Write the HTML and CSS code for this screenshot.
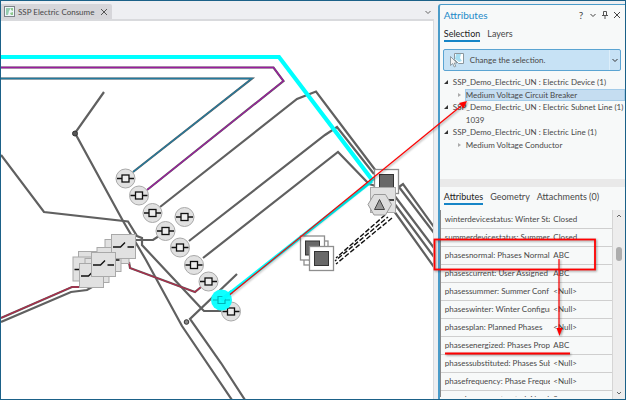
FILE: index.html
```html
<!DOCTYPE html>
<html lang="en">
<head>
<meta charset="utf-8">
<title>SSP Electric Consume</title>
<link rel="stylesheet" href="styles.css">
</head>
<body>
<div class="app">
  <main class="view">
    <div class="tabbar">
      <div class="doc-tab">
        <svg class="doc-icon" viewBox="0 0 11 11" aria-hidden="true">
          <rect x=".5" y=".5" width="10" height="10" fill="#eef5fa" stroke="#7c8288"/>
          <path d="M2 2h5L5 5l-1 4H2z" fill="#96ccb0"/>
          <path d="M7 2h2v3L7 4zM6 7l3-1v3H7z" fill="#8fc98e"/>
        </svg>
        <span>SSP Electric Consume</span>
        <button class="icon-btn" aria-label="Close view">
          <svg width="8" height="8" viewBox="0 0 8 8"><path d="M1 1l6 6M7 1L1 7" stroke="#555" fill="none"/></svg>
        </button>
      </div>
      <button class="icon-btn" aria-label="View list">
        <svg width="8" height="8" viewBox="0 0 8 8"><path d="M1.500 3l2.500 2.500L6.500 3" stroke="#666" fill="none"/></svg>
      </button>
    </div>
    <svg class="map" viewBox="1 21 433 378" preserveAspectRatio="xMinYMin slice" role="img" aria-label="Electric network diagram">
      <defs>
        <g id="breaker">
          <circle r="9.500" fill="#e1e1e1" stroke="#a9a9a9"/>
          <path d="M-8.500 0H-3.500M3.500 0H8.500" stroke="#111" stroke-width="1.300"/>
          <rect x="-3.500" y="-3.500" width="7" height="7" fill="#eee" stroke="#111" stroke-width="1.300"/>
        </g>
        <g id="switch">
          <rect width="24" height="24" fill="#e1e1e1" stroke="#a9a9a9"/>
          <path d="M1.500 12.500H9L13.500 8M16 12.500H22.500" fill="none" stroke="#111" stroke-width="1.400"/>
        </g>
        <g id="box">
          <rect width="24" height="24" fill="#fff" stroke="#8e8e8e" stroke-width="1.300"/>
          <rect x="5" y="5" width="14" height="14" fill="#686868" stroke="#333"/>
        </g>
      </defs>
      <g class="line">
        <path d="M104 92L75 133L123 221L146 260L182 326L232 400"/>
        <path d="M1 155L44 212L128 221.500L137 236L142 238V245L156 260L201 308L204 311H226"/>
        <path d="M135 240H153L162 234"/>
        <path d="M237 274L190 319L221 363L245 400"/>
        <path d="M160 207L297 99L316 91.500L345 130L376 171"/>
        <path d="M189 241L325 135L337 127L374 174"/>
        <path d="M203 258L338 152L369 184L376 186"/>
        <path d="M399 187L403 184L434 227M399 187L434 233M394 195L434 248M394 203L434 257M394 211L434 267"/>
        <path d="M1 322L71 292L87 290L92 287"/>
        <path d="M1 67.500H273.500L283.500 81L147 190M1 78.500H252L133 172"/>
        <path d="M129 262L130 268L195 292L201 287M1 318L72 287H82"/>
      </g>
      <path class="inner purple" d="M1 67.500H273.500L283.500 81L147 190"/>
      <path class="inner blue" d="M1 78.500H252L133 172"/>
      <path class="inner maroon" d="M129 262L130 268L195 292L201 287M1 318L72 287H82"/>
      <path d="M1 57H279L373 181" fill="none" stroke="#0ff" stroke-width="4.200"/>
      <path d="M372 181L221 300" fill="none" stroke="#0ff" stroke-width="3.200"/>
      <circle cx="75" cy="133.500" r="2.500" fill="#555" stroke="#333"/>
      <circle cx="186.500" cy="322" r="2.300" fill="#888" stroke="#333"/>

      <g fill="none" stroke="#111" stroke-width="1.400" stroke-dasharray="5 2">
        <path d="M385 215L336 258"/><path d="M388 217L335 261" stroke-dashoffset="3"/><path d="M392 218L336 264"/>
      </g>
      <use href="#box" x="304" y="241"/>
      <use href="#box" x="300.500" y="236"/>
      <use href="#box" x="309.500" y="246.500"/>
      <use href="#box" x="374.500" y="169.500"/>
      <rect x="370.500" y="187.500" width="25" height="25" fill="#e1e1e1" stroke="#a9a9a9"/>
      <path d="M389 200h5" stroke="#111" stroke-width="1.500"/>
      <path d="M368 204.500L374 194.500H385.500L391.500 204.500L385.500 215H374Z" fill="#dedede" stroke="#999"/>
      <path d="M379.500 199.500L384.500 209.500H374.500Z" fill="#999" stroke="#444"/>

      <use href="#switch" x="105" y="239.500"/>
      <use href="#switch" x="78.500" y="251.500"/>
      <use href="#switch" x="73" y="257"/>
      <use href="#switch" x="85" y="258.500"/>
      <use href="#switch" x="79.500" y="263.500"/>
      <use href="#switch" x="97" y="247.500"/>
      <use href="#switch" x="111.500" y="234.500"/>
      <use href="#switch" x="91.500" y="252.500"/>

      <use href="#breaker" x="125.500" y="178.500"/>
      <use href="#breaker" x="139" y="195.500"/>
      <use href="#breaker" x="152.500" y="213"/>
      <use href="#breaker" x="184.500" y="217"/>
      <use href="#breaker" x="165.500" y="231"/>
      <use href="#breaker" x="180" y="247.500"/>
      <use href="#breaker" x="194" y="265"/>
      <use href="#breaker" x="208.500" y="281.500"/>
      <use href="#breaker" x="231" y="311.500"/>
      <circle cx="221.500" cy="300" r="10.500" fill="#1ff"/>
      <path d="M213 300h5M225 300h5M218 296.500h7v7h-7z" fill="none" stroke="#00b5b8" stroke-width="1.200"/>
      <path d="M221 300L232 291.500" stroke="#0ff" stroke-width="4"/>
    </svg>
  </main>

  <aside class="pane">
    <header class="pane-head">
      <h1>Attributes</h1>
      <button class="icon-btn help" aria-label="Help">?</button>
      <button class="icon-btn" aria-label="Options"><svg width="8" height="8" viewBox="0 0 8 8"><path d="M1.500 3L4 5.500 6.500 3" stroke="#444" fill="none"/></svg></button>
      <button class="icon-btn" aria-label="Pin"><svg width="8" height="8" viewBox="0 0 8 8"><path d="M2.500 .5h3v4h-3zM1 4.500h6M4 4.500V8" stroke="#555" fill="none"/></svg></button>
      <button class="icon-btn" aria-label="Close"><svg width="8" height="8" viewBox="0 0 8 8"><path d="M1 1l6 6M7 1L1 7" stroke="#444" fill="none"/></svg></button>
    </header>
    <nav class="tabs">
      <a href="#selection" class="active">Selection</a>
      <a href="#layers">Layers</a>
    </nav>
    <div class="split-btn">
      <button class="change">
        <svg width="16" height="16" viewBox="0 0 16 16" aria-hidden="true">
          <path d="M5.500 1.500h9v10h-5l-4-4z" fill="#fff" stroke="#8b979e"/>
          <path d="M7 2h5l-1 4 2 3-3 1-4-3z" fill="#a6def2"/>
          <path d="M1.500 4.500v9l2.200-2 1.600 3.500 1.500-.8-1.500-3.200h2.700z" fill="#f4f4f4" stroke="#7e8a91" stroke-width=".8"/>
        </svg>
        <span>Change the selection.</span>
      </button>
      <button class="drop" aria-label="More selection options"><svg width="8" height="8" viewBox="0 0 8 8"><path d="M1.500 3L4 5.500 6.500 3" stroke="#333" fill="none"/></svg></button>
    </div>
    <ul class="tree">
      <li><div class="group">SSP_Demo_Electric_UN : Electric Device (1)</div>
        <ul><li class="leaf more"><span class="label selected">Medium Voltage Circuit Breaker</span></li></ul></li>
      <li><div class="group">SSP_Demo_Electric_UN : Electric Subnet Line (1)</div>
        <ul><li class="leaf"><span class="label">1039</span></li></ul></li>
      <li><div class="group">SSP_Demo_Electric_UN : Electric Line (1)</div>
        <ul><li class="leaf more"><span class="label">Medium Voltage Conductor</span></li></ul></li>
    </ul>
    <div class="splitter"></div>
    <nav class="tabs lower">
      <a href="#attributes" class="active">Attributes</a>
      <a href="#geometry">Geometry</a>
      <a href="#attachments">Attachments (0)</a>
    </nav>
    <div class="grid">
      <div class="table-wrap">
        <table>
          <tr><th scope="row">winterdevicestatus: Winter Stat</th><td>Closed</td></tr>
          <tr><th scope="row">summerdevicestatus: Summer</th><td>Closed</td></tr>
          <tr><th scope="row">phasesnormal: Phases Normal</th><td>ABC</td></tr>
          <tr><th scope="row">phasescurrent: User Assigned P</th><td>ABC</td></tr>
          <tr><th scope="row">phasessummer: Summer Conf</th><td>&lt;Null&gt;</td></tr>
          <tr><th scope="row">phaseswinter: Winter Configur</th><td>&lt;Null&gt;</td></tr>
          <tr><th scope="row">phasesplan: Planned Phases</th><td>&lt;Null&gt;</td></tr>
          <tr><th scope="row">phasesenergized: Phases Propa</th><td>ABC</td></tr>
          <tr><th scope="row">phasessubstituted: Phases Sub</th><td>&lt;Null&gt;</td></tr>
          <tr><th scope="row">phasefrequency: Phase Freque</th><td>&lt;Null&gt;</td></tr>
          <tr><th scope="row">numphasesconstructed: Numl</th><td>0</td></tr>
        </table>
      </div>
      <div class="scroll" aria-hidden="true">
        <svg width="8" height="8" viewBox="0 0 8 8"><path d="M2 5l2-2 2 2" stroke="#666" fill="none"/></svg>
        <div class="thumb"></div>
        <svg width="8" height="8" viewBox="0 0 8 8"><path d="M2 3l2 2 2-2" stroke="#666" fill="none"/></svg>
      </div>
    </div>
  </aside>

  <svg class="notes" viewBox="0 0 626 400" preserveAspectRatio="xMinYMin slice" aria-hidden="true">
    <g class="note-lines">
      <path d="M230 294.500L461 106" stroke-width="1.200"/>
      <path d="M467 101L463.500 108.500L459 103Z" fill="#f00" stroke="none"/>
      <rect x="434.500" y="239.500" width="160.500" height="30" stroke-width="1.800"/>
      <path d="M559 259V330" stroke-width="1.200"/>
      <path d="M556.500 328H562.500L559.500 336Z" fill="#f00" stroke="none"/>
      <path d="M445 353.500H570" stroke-width="2"/>
    </g>
  </svg>
</div>
</body>
</html>
```
FILE: styles.css
```css
* { box-sizing: border-box; }
body {
  margin: 0;
  font: 8px/12px Lato, "Open Sans", sans-serif;
  color: #484848;
}
button { font: inherit; color: inherit; border: 0; padding: 0; background: none; }
ul { list-style: none; margin: 0; padding: 0; }
svg { display: block; }

.app {
  position: relative;
  display: grid;
  grid-template-columns: minmax(0, 1fr) 30%;
  height: 100vh;
  overflow: hidden;
  background: #eeeff2;
  border: 1px solid #1b6188;
}
.view {
  display: flex;
  flex-direction: column;
  min-width: 0;
  padding-right: 4px;
}
.tabbar {
  display: flex;
  justify-content: space-between;
  align-items: center;
  height: 20px;
  flex: none;
  padding-top: 3px;
  border-bottom: 2px solid #d9dadd;
}
.doc-tab {
  display: flex;
  align-items: center;
  gap: 3px;
  height: 100%;
  padding: 0 4px 0 3px;
  background: #d6d6da;
  border-radius: 0 2px 0 0;
}
.doc-tab span { margin-right: 3px; }
.doc-icon { width: 11px; height: 11px; }
.icon-btn { display: grid; place-items: center; width: 8px; height: 12px; }
.tabbar > .icon-btn { width: 12px; }
.map {
  flex: 1;
  width: 100%;
  min-height: 0;
  background: #fff;
  border-right: 1px solid #dadbde;
}
.line { fill: none; stroke: #606060; stroke-width: 2.2; }
.inner { fill: none; stroke-width: 1.3; }
.purple { stroke: #9b1c9e; }
.blue { stroke: #227a9e; }
.maroon { stroke: #b02a49; }

.pane {
  display: flex;
  flex-direction: column;
  min-width: 0;
  margin-top: 3px;
  background: #f7f9f9;
  border: 1px solid #4a9bc9;
  border-width: 1px 0 0 2px;
  border-radius: 3px 0 0 0;
  overflow: hidden;
}
.pane-head {
  display: flex;
  align-items: center;
  gap: 4px;
  height: 20px;
  padding: 0 4px 0 4px;
  flex: none;
}
.pane-head h1 {
  flex: 1;
  margin: 0;
  font-size: 10px;
  line-height: 12px;
  font-weight: 400;
  color: #238ac8;
}
.help { font-size: 10px; }
.tabs { display: flex; gap: 7px; padding: 3px 4px 0; flex: none; }
.tabs a {
  color: inherit;
  text-decoration: none;
  font-size: 9px;
  line-height: 12px;
  border-bottom: 2px solid transparent;
}
.tabs .active { border-color: #1685c7; color: #222; }
.split-btn {
  display: flex;
  flex: none;
  height: 22px;
  margin: 7px 4px 5px 3px;
  background: #c7e2f5;
  border: 1px solid #5ba4d2;
  border-radius: 2px;
}
.change { flex: 1; display: flex; align-items: center; gap: 5px; padding-left: 5px; }
.drop { display: grid; place-items: center; width: 11px; border-left: 1px solid #dceefa; }

.tree { flex: none; height: 103px; }
.group {
  position: relative;
  padding-left: 13px;
  line-height: 13px;
  white-space: nowrap;
}
.group::before {
  content: "";
  position: absolute;
  left: 4px;
  top: 4px;
  border-left: 4px solid transparent;
  border-bottom: 4px solid #333;
}
.leaf { display: flex; padding-left: 25px; height: 12px; position: relative; }
.more::before {
  content: "";
  position: absolute;
  left: 18px;
  top: 4px;
  border: 2px solid transparent;
  border-left: 3px solid #aaa;
  border-right: 0;
}
.label { flex: 1; padding-left: 1px; line-height: 12px; }
.selected { background: #c5ddf1; outline: 1px solid #a3cbe8; outline-offset: -1px; }
.splitter { height: 8px; flex: none; background: #e9e9e9; }
.lower { padding-top: 4px; }

.grid {
  display: flex;
  flex: 1;
  min-height: 0;
  margin-top: 5px;
}
.table-wrap { flex: 1; min-width: 0; margin-bottom: 2px; overflow: hidden; border-left: 1px solid #888; }
table { width: 100%; table-layout: fixed; border-collapse: collapse; }
th, td {
  height: 18px;
  padding: 0;
  font-weight: 400;
  text-align: left;
  white-space: nowrap;
  overflow: hidden;
  border-bottom: 1px solid #cfcfcf;
}
th { width: 64%; padding-left: 4px; }
td { padding-left: 3px; }
.scroll {
  width: 13px;
  display: flex;
  flex-direction: column;
  align-items: center;
  padding: 2px 0;
  background: #ededed;
  border-left: 1px solid #d5d5d5;
}
.thumb { width: 6px; height: 14px; margin: 27px 0 auto; border-radius: 3px; background: #adadad; }

.notes { position: absolute; inset: -1px; width: 100vw; height: 100vh; pointer-events: none; }
.note-lines { fill: none; stroke: #f00; filter: drop-shadow(1px 1px 1px #0006); }
```
